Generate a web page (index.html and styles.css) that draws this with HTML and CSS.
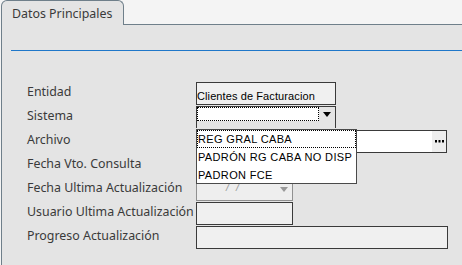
FILE: index.html
```html
<!DOCTYPE html>
<html>
<head>
<meta charset="utf-8">
<link rel="stylesheet" href="styles.css">
</head>
<body>
<div class="tabs">
  <div class="tab">Datos Principales</div>
  <div class="tab-fill"></div>
</div>
<div class="panel">
  <div class="rule"></div>
  <div class="form">
    <div class="row">
      <div class="label">Entidad</div>
      <div class="field ro w140"><span class="val">Clientes de Facturacion</span></div>
    </div>
    <div class="row">
      <div class="label">Sistema</div>
      <div class="combo w140">
        <div class="combo-edit"></div>
        <div class="combo-btn"><span class="arrow"></span></div>
      </div>
      <div class="list">
        <div class="item sel">REG GRAL CABA</div>
        <div class="item">PADRÓN RG CABA NO DISP</div>
        <div class="item">PADRON FCE</div>
      </div>
    </div>
    <div class="row">
      <div class="label">Archivo</div>
      <div class="field white w251">
        <span class="dots"><svg width="9" height="3" viewBox="0 0 9 3"><rect x="0" y="0" width="2" height="2.5" fill="#000"/><rect x="3.5" y="0" width="2" height="2.5" fill="#000"/><rect x="7" y="0" width="2" height="2.5" fill="#000"/></svg></span>
      </div>
    </div>
    <div class="row">
      <div class="label">Fecha Vto. Consulta</div>
      <div class="field date w97"><span class="arrow grey"></span></div>
    </div>
    <div class="row">
      <div class="label">Fecha Ultima Actualización</div>
      <div class="field date w97"><span class="slashes">/ /</span><span class="arrow grey"></span></div>
    </div>
    <div class="row">
      <div class="label">Usuario Ultima Actualización</div>
      <div class="field ro w97"></div>
    </div>
    <div class="row">
      <div class="label">Progreso Actualización</div>
      <div class="field ro w252"></div>
    </div>
  </div>
</div>
</body>
</html>
```
FILE: styles.css
```css
html, body {
  margin: 0;
  padding: 0;
  background: #f4f4f4;
  width: 462px;
  height: 265px;
  overflow: hidden;
  font-family: "Noto Sans", sans-serif;
}
.tabs {
  display: flex;
  height: 25px;
}
.tab {
  margin-left: 1px;
  width: 123px;
  box-sizing: border-box;
  border: 1px solid #6f7f8a;
  border-bottom: none;
  border-radius: 6px 6px 0 0;
  background: #e4e4e4;
  color: #3a3a3a;
  font-size: 12.4px;
  padding-left: 10px;
  line-height: 26px;
  height: 25px;
}
.tab-fill {
  flex: 1;
  border-bottom: 1px solid #6f7f8a;
}
.panel {
  margin-left: 1px;
  border-left: 1px solid #6f7f8a;
  background: #e4e4e4;
  height: 240px;
  padding-top: 25px;
  box-sizing: border-box;
}
.rule {
  margin-left: 9px;
  height: 1px;
  background: #1f77c9;
}
.form {
  padding-top: 31px;
  padding-left: 25px;
}
.row {
  display: flex;
  align-items: flex-start;
  height: 24px;
  position: relative;
}
.label {
  width: 169px;
  font-size: 12.4px;
  color: #3a3a3a;
  line-height: 20px;
  white-space: nowrap;
}
.field {
  height: 23px;
  box-sizing: border-box;
  border: 1px solid #3a3a3a;
  position: relative;
}
.w140 { width: 140px; }
.w97 { width: 97px; }
.w251 { width: 251px; }
.w252 { width: 252px; }
.ro { background: #f0f0f0; }
.white { background: #fff; }
.val {
  font-family: "Liberation Sans", sans-serif;
  font-size: 11px;
  color: #000;
  line-height: 21px;
  letter-spacing: 0.1px;
}
.dots {
  position: absolute;
  right: 0;
  top: 0;
  bottom: 0;
  width: 14px;
  background: #eee;
  display: flex;
  justify-content: center;
  align-items: center;
}
.combo {
  height: 22px;
  box-sizing: border-box;
  border: 1px solid #3a3a3a;
  border-bottom: none;
  display: flex;
  background: #e4e4e4;
}
.combo-edit {
  width: 120px;
  height: 12px;
  background: #fff;
  border: 1px dotted #000;
}
.combo-btn {
  flex: 1;
  height: 14px;
  display: flex;
  justify-content: center;
  align-items: center;
}
.arrow {
  width: 0;
  height: 0;
  border-left: 4px solid transparent;
  border-right: 4px solid transparent;
  border-top: 5px solid #000;
}
.arrow.grey {
  position: absolute;
  right: 4px;
  top: 8px;
  border-top-color: #999;
}
.date {
  background: #eee;
  border-color: #909090;
}
.slashes {
  position: absolute;
  left: 29px;
  top: 2px;
  font-family: "Liberation Sans", sans-serif;
  font-style: italic;
  font-size: 11px;
  color: #999;
  word-spacing: 4px;
}
.list {
  position: absolute;
  left: 169px;
  top: 23px;
  width: 161px;
  height: 55px;
  box-sizing: border-box;
  border: 1px solid #4a4a4a;
  background: #fff;
  z-index: 2;
  font-family: "Liberation Sans", sans-serif;
  font-size: 11px;
  letter-spacing: 0.35px;
  color: #000;
}
.item {
  height: 18px;
  line-height: 19px;
  padding-left: 1px;
  box-sizing: border-box;
}
.item.sel {
  border: 1px dotted #000;
  line-height: 17px;
  padding-left: 0;
}
```
